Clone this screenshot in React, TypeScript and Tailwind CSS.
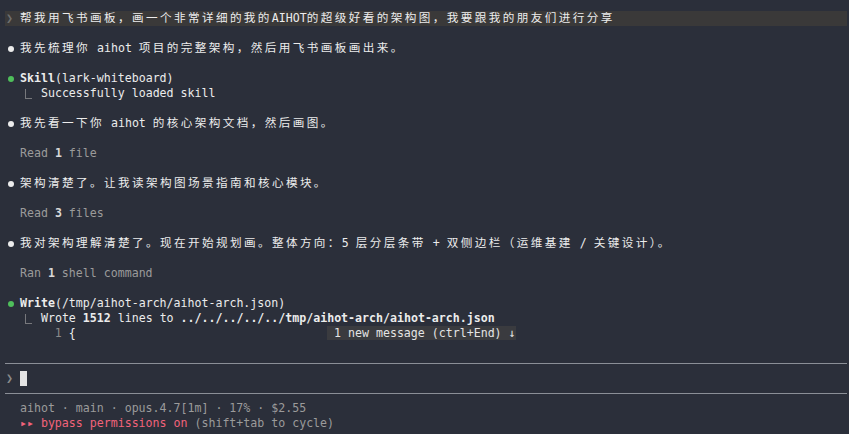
import type { ReactNode } from "react";

// split text so CJK runs get the extra tracking a terminal gives wide cells
function T({ text, className = "" }: { text: string; className?: string }) {
  const parts = text.split(/([\u2E80-\uFFEF]+)/);
  return (
    <span className={className}>
      {parts.map((p, i) =>
        i % 2 === 1 ? (
          <span key={i} className="tracking-[2.4px]">{p}</span>
        ) : (
          <span key={i}>{p}</span>
        ),
      )}
    </span>
  );
}

function Row({ children, className = "" }: { children?: ReactNode; className?: string }) {
  return <div className={`h-[15px] leading-[15px] whitespace-pre ${className}`}>{children}</div>;
}

function Dot({ green = false }: { green?: boolean }) {
  return (
    <span className="inline-flex w-[14px] h-[15px] items-center align-top">
      <span className={`ml-[2px] w-[6px] h-[6px] rounded-full ${green ? "bg-[#4fbf5b]" : "bg-[#ececec]"}`} />
    </span>
  );
}

function Elbow() {
  return (
    <span className="inline-flex w-[14px] h-[15px] align-top">
      <span className="-ml-[2px] mt-[3px] w-[7px] h-[10px] border-l border-b border-[#77787c]" />
    </span>
  );
}

function Sep() {
  return (
    <div className="h-[15px] flex items-center">
      <div className="h-px w-full bg-[#8b8f97]" />
    </div>
  );
}

export default function App() {
  return (
    <div className="w-[849px] h-[434px] overflow-hidden bg-[#2b2f3a] text-[#ececec] text-[11.6px] font-[family-name:'DejaVu_Sans_Mono','Noto_Sans_CJK_SC',monospace] pt-[11px] pl-[5px] pr-[2px]">
      <Row className="bg-[#3a3939] pl-[1px]">
        <span className="text-[#6f6f6f]">❯ </span>
        <T text="帮我用飞书画板，画一个非常详细的我的AIHOT的超级好看的架构图，我要跟我的朋友们进行分享" />
      </Row>
      <Row />
      <Row className="pl-[1px]">
        <Dot />
        <T text="我先梳理你 aihot 项目的完整架构，然后用飞书画板画出来。" />
      </Row>
      <Row />
      <Row className="pl-[1px]">
        <Dot green />
        <span className="font-bold">Skill</span>(lark-whiteboard)
      </Row>
      <Row className="pl-[1px]">
        {"   "}
        <Elbow />
        Successfully loaded skill
      </Row>
      <Row />
      <Row className="pl-[1px]">
        <Dot />
        <T text="我先看一下你 aihot 的核心架构文档，然后画图。" />
      </Row>
      <Row />
      <Row className="pl-[1px] text-[#9b9b9b]">
        {"  Read "}
        <span className="font-bold text-[#d8d8d8]">1</span> file
      </Row>
      <Row />
      <Row className="pl-[1px]">
        <Dot />
        <T text="架构清楚了。让我读架构图场景指南和核心模块。" />
      </Row>
      <Row />
      <Row className="pl-[1px] text-[#9b9b9b]">
        {"  Read "}
        <span className="font-bold text-[#d8d8d8]">3</span> files
      </Row>
      <Row />
      <Row className="pl-[1px]">
        <Dot />
        <T text="我对架构理解清楚了。现在开始规划画。整体方向：5 层分层条带 + 双侧边栏（运维基建 / 关键设计）。" />
      </Row>
      <Row />
      <Row className="pl-[1px] text-[#9b9b9b]">
        {"  Ran "}
        <span className="font-bold text-[#d8d8d8]">1</span> shell command
      </Row>
      <Row />
      <Row className="pl-[1px]">
        <Dot green />
        <span className="font-bold">Write</span>(/tmp/aihot-arch/aihot-arch.json)
      </Row>
      <Row className="pl-[1px]">
        {"   "}
        <Elbow />
        {"Wrote "}
        <span className="font-bold">1512</span>
        {" lines to "}
        <span className="font-bold">../../../../../tmp/aihot-arch/aihot-arch.json</span>
      </Row>
      <Row className="pl-[1px]">
        <span className="text-[#8a8a8a]">{"       1 "}</span>
        {"{"}
        {"                                    "}
        <span className="bg-[#3a3b3f] text-[#e4e4e4]">{" 1 new message (ctrl+End) ↓"}</span>
      </Row>
      <Row />
      <Sep />
      <Row className="pl-[1px]">
        <span className="text-[#8a8a8a]">❯ </span>
        <span className="inline-block w-[7px] h-[15px] bg-[#e4e4e4] align-top" />
      </Row>
      <Sep />
      <Row className="pl-[1px] text-[#9b9b9b]">{"  aihot · main · opus.4.7[1m] · 17% · $2.55"}</Row>
      <Row className="pl-[1px]">
        <span className="text-[#f2637a]">{"  ▸▸ bypass permissions on"}</span>
        <span className="text-[#9b9b9b]">{" (shift+tab to cycle)"}</span>
      </Row>
    </div>
  );
}
